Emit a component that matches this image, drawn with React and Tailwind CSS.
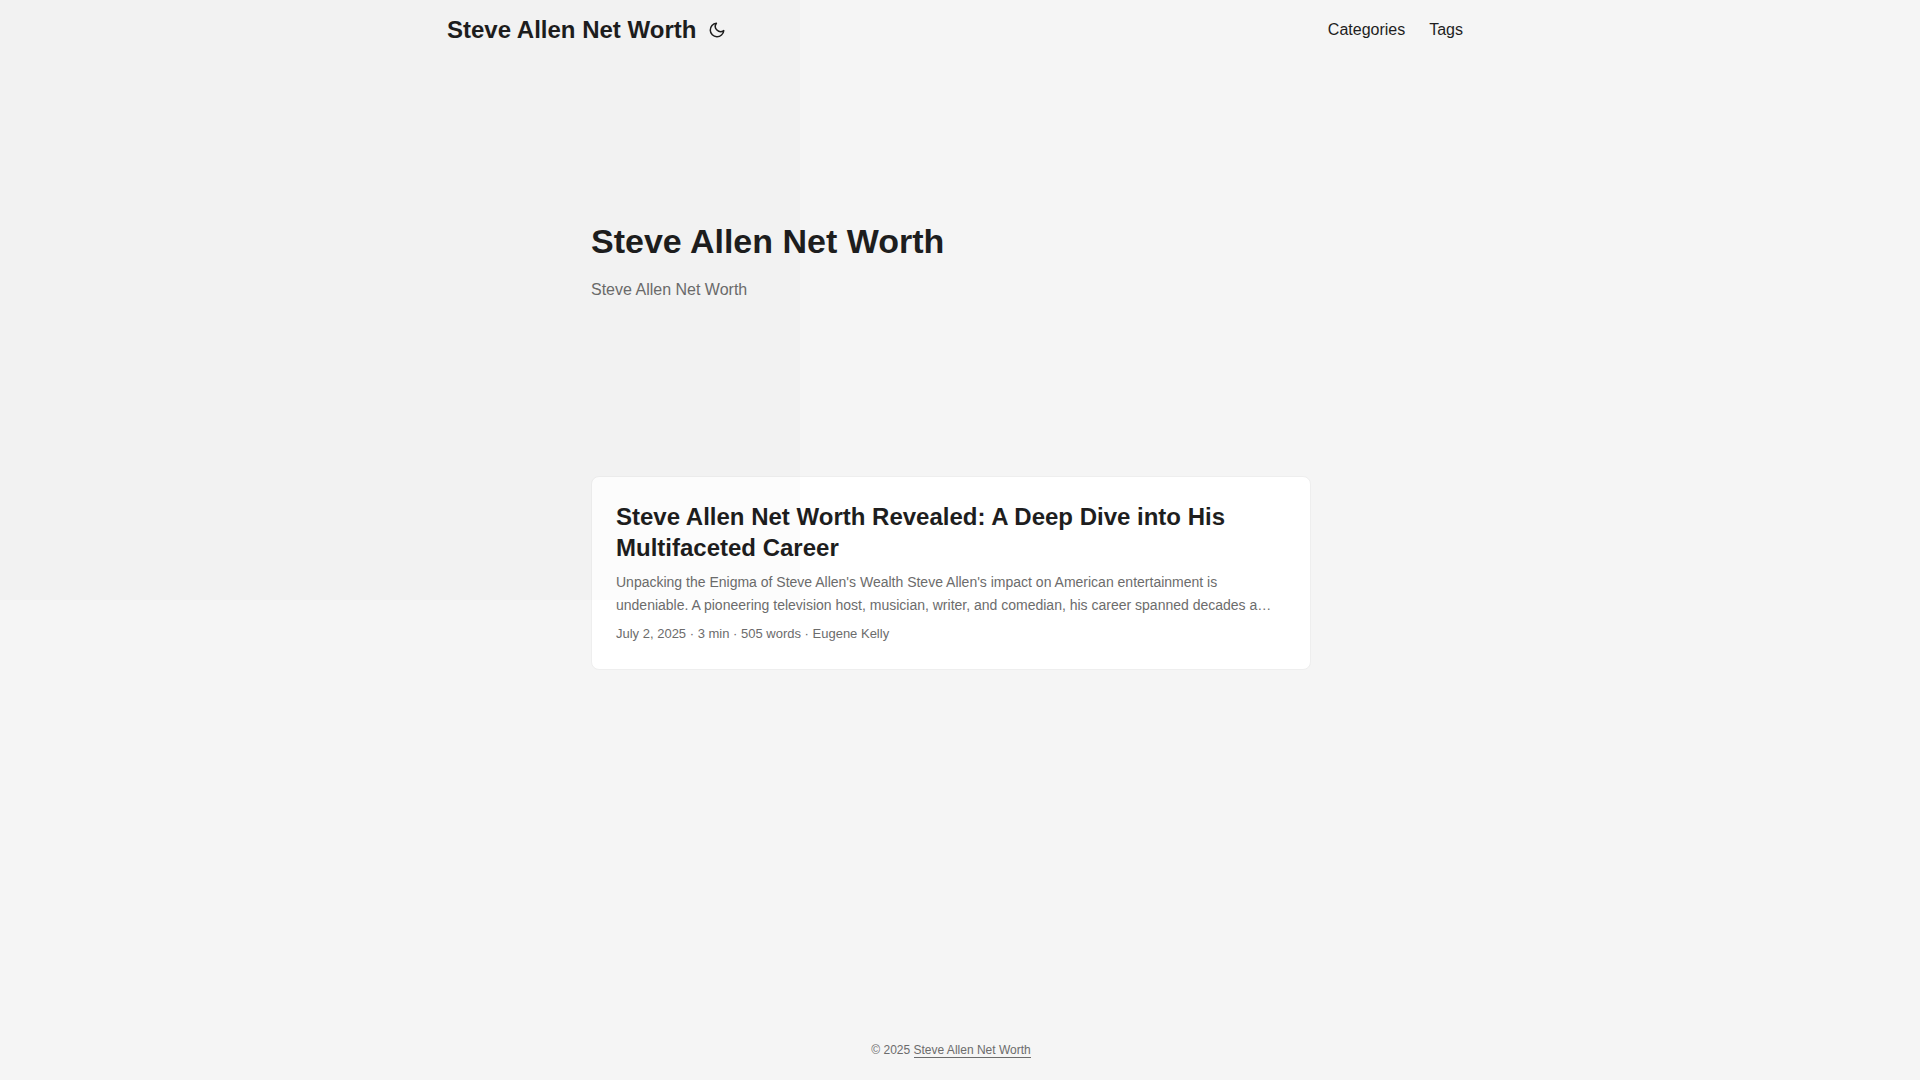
import React, { useState } from 'react';

const SITE_TITLE = 'Steve Allen Net Worth';

const posts = [
  {
    title: 'Steve Allen Net Worth Revealed: A Deep Dive into His Multifaceted Career',
    summary:
      "Unpacking the Enigma of Steve Allen's Wealth Steve Allen's impact on American entertainment is undeniable. A pioneering television host, musician, writer, and comedian, his career spanned decades a…",
    meta: 'July 2, 2025 · 3 min · 505 words · Eugene Kelly',
  },
];

const menu = ['Categories', 'Tags'];

export default function App() {
  const [dark, setDark] = useState(false);

  return (
    <div className="relative flex min-h-screen flex-col bg-[#f5f5f5] font-['Liberation_Sans',Arial,sans-serif] text-[#1e1e1e]">
      <Header onToggle={() => setDark(!dark)} dark={dark} />

      <main className="w-full grow pr-[18px]">
        <div className="mx-auto max-w-3xl px-6 pt-6">
          {/* Intro */}
          <section className="mb-[38px] flex min-h-[354px] flex-col justify-center">
            <h1 className="text-[34px] leading-[44px] font-bold">{SITE_TITLE}</h1>
            <p className="mt-[14px] text-base leading-[26px] text-[#6c6c6c]">{SITE_TITLE}</p>
          </section>

          {posts.map((post) => (
            <PostCard key={post.title} post={post} />
          ))}
        </div>
      </main>

      <footer className="flex h-[60px] items-center justify-center pr-[18px] text-xs leading-6 text-[#6c6c6c]">
        <span>
          © 2025{' '}
          <a href="#" className="border-b border-[#6c6c6c]">
            {SITE_TITLE}
          </a>
        </span>
      </footer>

      {/* Faint tint over the top left corner */}
      <div className="pointer-events-none absolute top-0 left-0 h-[600px] w-[800px] bg-black/[0.012]" />
    </div>
  );
}

const Header = ({ onToggle, dark }) => (
  <header className="w-full pr-[10px]">
    <nav className="mx-auto flex h-[60px] max-w-[1016px] items-center justify-between">
      <div className="flex items-center">
        <a href="#" className="text-2xl font-bold">
          {SITE_TITLE}
        </a>
        <button
          onClick={onToggle}
          aria-label="Toggle theme"
          aria-pressed={dark}
          className="ml-3 flex cursor-pointer items-center"
        >
          <svg
            width="18"
            height="18"
            viewBox="0 0 24 24"
            fill="none"
            stroke="currentColor"
            strokeWidth="2"
            strokeLinecap="round"
            strokeLinejoin="round"
          >
            <path d="M21 12.79A9 9 0 1 1 11.21 3 7 7 0 0 0 21 12.79z" />
          </svg>
        </button>
      </div>
      <ul className="flex gap-6">
        {menu.map((item) => (
          <li key={item}>
            <a href="#" className="text-base">
              {item}
            </a>
          </li>
        ))}
      </ul>
    </nav>
  </header>
);

const PostCard = ({ post }) => (
  <article className="mb-6 rounded-lg border border-[#eeeeee] bg-white p-6">
    <h2 className="text-2xl leading-[31px] font-bold">
      <a href="#">{post.title}</a>
    </h2>
    <p className="mt-2 mb-1.5 text-sm leading-[23px] text-[#6c6c6c]">{post.summary}</p>
    <div className="text-[13px] leading-[22px] text-[#6c6c6c]">{post.meta}</div>
  </article>
);
